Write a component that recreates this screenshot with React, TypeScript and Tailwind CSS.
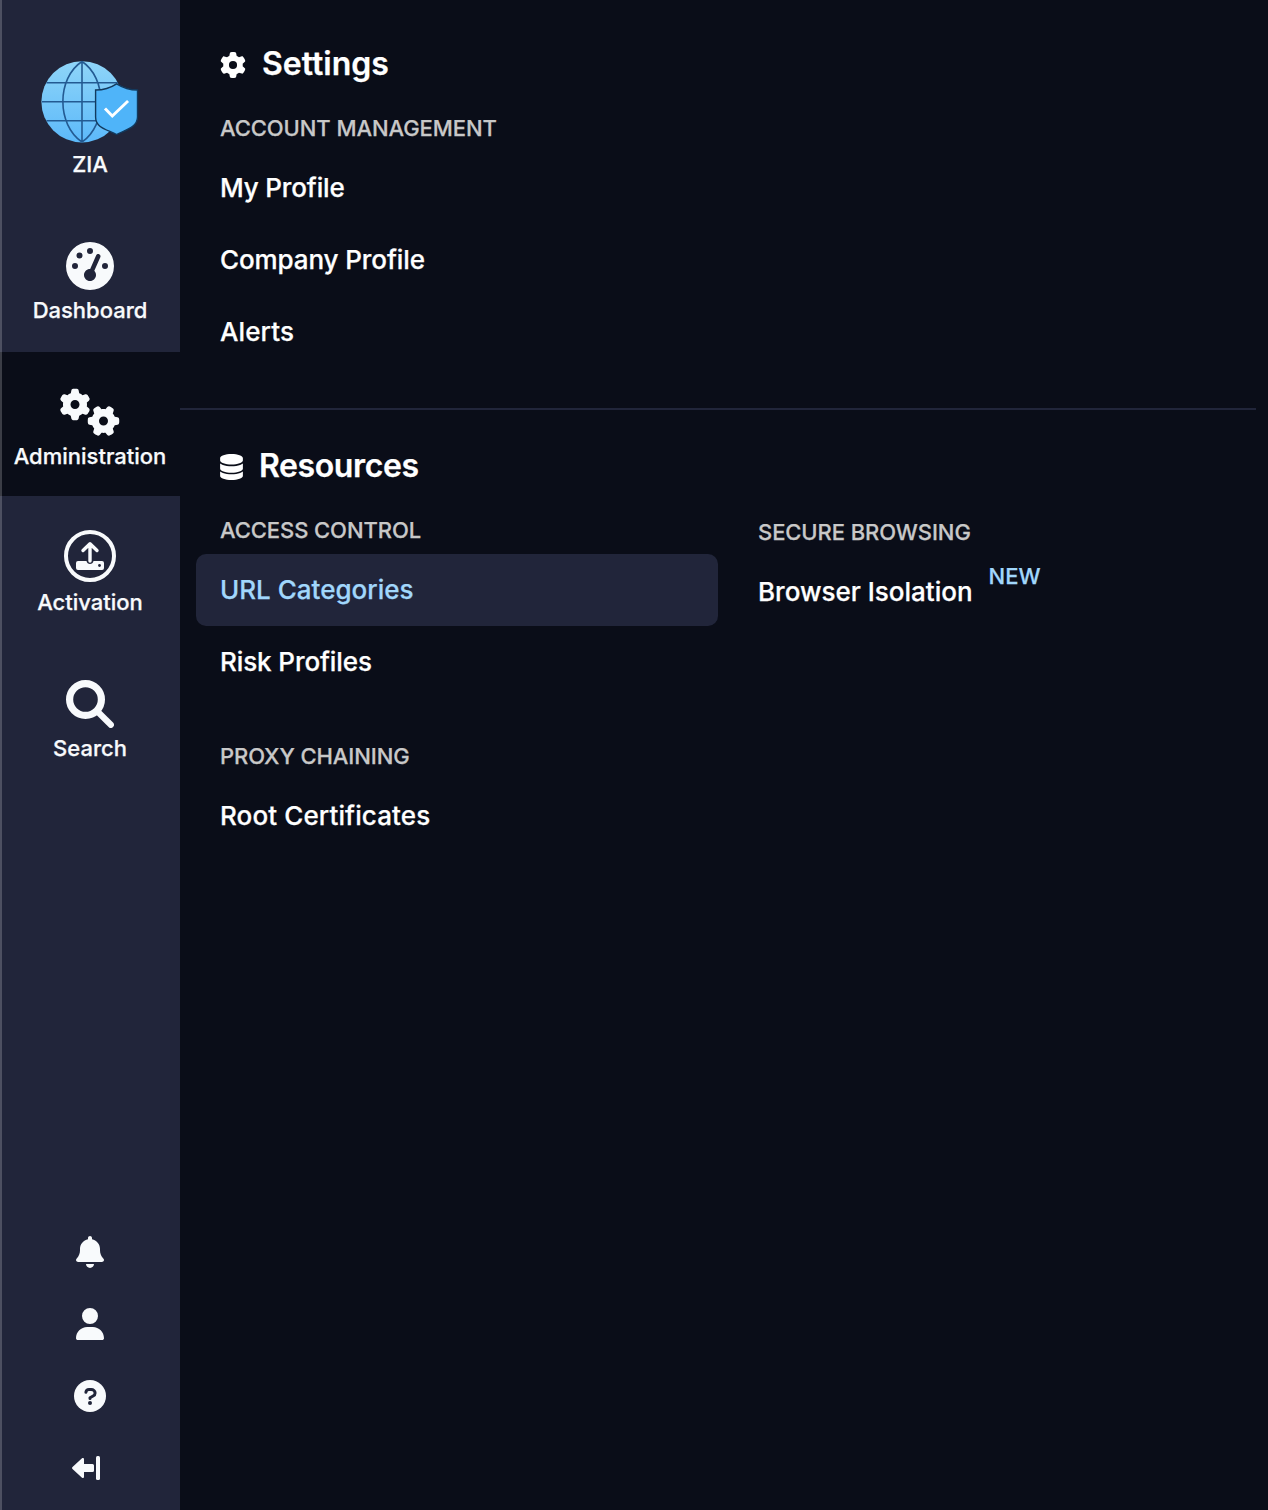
import type { ReactNode } from 'react';
import { FaGaugeHigh, FaGears, FaBell, FaUser, FaGear, FaDatabase } from 'react-icons/fa6';

function ZiaLogo() {
  return (
    <svg width="98" height="84" viewBox="0 0 98 84" fill="none">
      <defs>
        <linearGradient id="globe" x1="41" y1="1" x2="41" y2="82" gradientUnits="userSpaceOnUse">
          <stop stopColor="#8fd5f8" />
          <stop offset="1" stopColor="#5cb9fa" />
        </linearGradient>
      </defs>
      <circle cx="41" cy="41.8" r="40.6" fill="url(#globe)" />
      <path d="M41 1.500V82M1 41.700H81M5.500 22.800H77M5.500 60.800H76.500M41 1.500C15.500 18 15.500 65 41 82M41 1.500C66.200 18 66.200 65 41 82" stroke="#235a92" strokeWidth="1.600" />
      <path d="M75.600 23.800C70 27.500 62 30 54.600 30V57C54.600 68 66 69.500 75.600 74.500C85.500 69.500 96.500 67 96.500 57V30C89.500 30 81.500 27.500 75.600 23.800Z" fill="#4fb4f9" stroke="#123a5e" strokeWidth="1.400" />
      <path d="M65 49.500L71.300 56L86 42" stroke="#fff" strokeWidth="2.900" strokeLinecap="square" />
    </svg>
  );
}

function ActivationIcon() {
  return (
    <svg className="mb-1 shrink-0" width="52" height="52" viewBox="0 0 52 52" fill="none">
      <circle cx="26" cy="26" r="24" stroke="#f8fafc" strokeWidth="4" />
      <path d="M14 31H22.500C23 35 29 35 29.500 31H38A2 2 0 0 1 40 33V38A2 2 0 0 1 38 40H14A2 2 0 0 1 12 38V33A2 2 0 0 1 14 31Z" fill="#f8fafc" />
      <circle cx="35.500" cy="35.500" r="1.400" fill="#21253a" />
      <path d="M26 31V14M19 20.500L26 13.700L33 20.500" stroke="#f8fafc" strokeWidth="3.400" strokeLinecap="round" strokeLinejoin="round" />
    </svg>
  );
}

function SearchIcon() {
  return (
    <svg width="48" height="48" viewBox="0 0 48 48" fill="none" stroke="#f8fafc">
      <circle cx="19.500" cy="19.500" r="15.900" strokeWidth="7.200" />
      <path d="M32 32L44.800 44.800" strokeWidth="6.200" strokeLinecap="round" />
    </svg>
  );
}

function HelpIcon() {
  return (
    <svg width="32" height="32" viewBox="0 0 32 32" fill="none">
      <circle cx="16" cy="16" r="16" fill="#f8fafc" />
      <path d="M11.900 12.300C12.200 10.500 13.200 9.600 15 9.600H17.200C19.500 9.600 21.100 11 21.100 12.900C21.100 14.500 20.200 15.400 19.100 16L16 17.700V18.600" stroke="#21253a" strokeWidth="3" strokeLinecap="round" strokeLinejoin="round" />
      <circle cx="16" cy="23" r="2" fill="#21253a" />
    </svg>
  );
}

function CollapseIcon() {
  return (
    <svg width="28" height="24" viewBox="0 0 28 24" fill="#f8fafc">
      <path d="M.5 11L10 2.300C10.800 1.600 12 2 12 3.200V8H20.500A1.500 1.500 0 0 1 22 9.500V14.500A1.500 1.500 0 0 1 20.500 16H12V20.800C12 22 10.800 22.400 10 21.700L.5 13Q-.4 12 .5 11Z" />
      <rect x="24" y="0" width="4" height="24" rx="1.500" />
    </svg>
  );
}

function NavItem({ label, icon, active }: { label: string; icon: ReactNode; active?: boolean }) {
  return (
    <a className={`flex h-36 flex-col items-center ${active ? 'bg-[#0a0d18]' : ''}`}>
      <span className="mt-[34px] flex h-[52px] items-center justify-center">{icon}</span>
      <span className="mt-0.5 text-[22px] leading-8 font-medium">{label}</span>
    </a>
  );
}

function Heading({ icon, className = '', children }: { icon: ReactNode; className?: string; children: string }) {
  return (
    <h2 className={`flex h-10 items-center gap-4 text-[32px] leading-10 font-semibold ${className}`}>
      {icon}
      <span className="pb-0.5">{children}</span>
    </h2>
  );
}

function Group({ title, children }: { title: string; children: ReactNode }) {
  return (
    <section>
      <h3 className="h-8 px-6 text-[22px] leading-8 font-medium tracking-[-0.08px] text-[#c8c8c8]">{title}</h3>
      <ul className="mt-2">{children}</ul>
    </section>
  );
}

function Item({ children, selected, className = '' }: { children: ReactNode; selected?: boolean; className?: string }) {
  return (
    <li className={`flex h-[72px] items-center rounded-[10px] px-6 pb-0.5 text-[26px] font-medium ${selected ? 'bg-[#21253a] text-[#a1d7fc]' : ''} ${className}`}>
      {children}
    </li>
  );
}

export default function App() {
  return (
    <div className="flex h-[1510px] w-[1268px] overflow-hidden bg-[#0a0d18] font-['Inter',sans-serif] text-white [-webkit-text-stroke:0.25px_currentColor]">
      <aside className="relative flex w-[180px] shrink-0 flex-col bg-[#21253a] text-[#f8fafc]">
        <div className="absolute inset-y-0 left-0 w-0.5 bg-white/20" />
        <div className="flex h-[206px] flex-col items-center pt-[60px]">
          <ZiaLogo />
          <span className="mt-1 text-[22px] leading-8 font-medium">ZIA</span>
        </div>
        <nav className="flex flex-col gap-0.5">
          <NavItem label="Dashboard" icon={<FaGaugeHigh size={48} />} />
          <NavItem label="Administration" active icon={<FaGears className="h-12 w-[60px]" />} />
          <NavItem label="Activation" icon={<ActivationIcon />} />
          <NavItem label="Search" icon={<SearchIcon />} />
        </nav>
        <div className="mt-auto flex flex-col items-center pb-[6px]">
          <span className="flex h-[72px] items-center"><FaBell size={32} /></span>
          <span className="flex h-[72px] items-center"><FaUser size={32} /></span>
          <span className="flex h-[72px] items-center"><HelpIcon /></span>
          <span className="mr-2 flex h-[72px] items-center"><CollapseIcon /></span>
        </div>
      </aside>
      <main className="flex w-[1076px] flex-col">
        <div className="h-[410px] border-b-2 border-[#21253a] pt-[45px] pl-4">
          <div className="pl-6"><Heading icon={<FaGear size={26} />}>Settings</Heading></div>
          <div className="mt-[27px] w-[522px]">
            <Group title="ACCOUNT MANAGEMENT">
              <Item className="tracking-[-0.15px]">My Profile</Item>
              <Item className="tracking-[-0.1px]">Company Profile</Item>
              <Item className="tracking-[0.1px]">Alerts</Item>
            </Group>
          </div>
        </div>
        <div className="pt-[37px] pl-4">
          <div className="pl-6"><Heading className="tracking-[-0.4px]" icon={<FaDatabase className="h-[26px] w-[23px]" />}>Resources</Heading></div>
          <div className="mt-[27px] flex gap-4">
            <div className="flex w-[522px] flex-col gap-[42px]">
              <Group title="ACCESS CONTROL">
                <Item selected>URL Categories</Item>
                <Item className="tracking-[-0.1px]">Risk Profiles</Item>
              </Group>
              <Group title="PROXY CHAINING">
                <Item className="tracking-[0.12px]">Root Certificates</Item>
              </Group>
            </div>
            <div className="w-[522px] pt-0.5">
              <Group title="SECURE BROWSING">
                <Item>
                  Browser Isolation
                  <span className="mb-[30px] ml-4 text-[22px] leading-none text-[#a1d7fc]">NEW</span>
                </Item>
              </Group>
            </div>
          </div>
        </div>
      </main>
    </div>
  );
}
